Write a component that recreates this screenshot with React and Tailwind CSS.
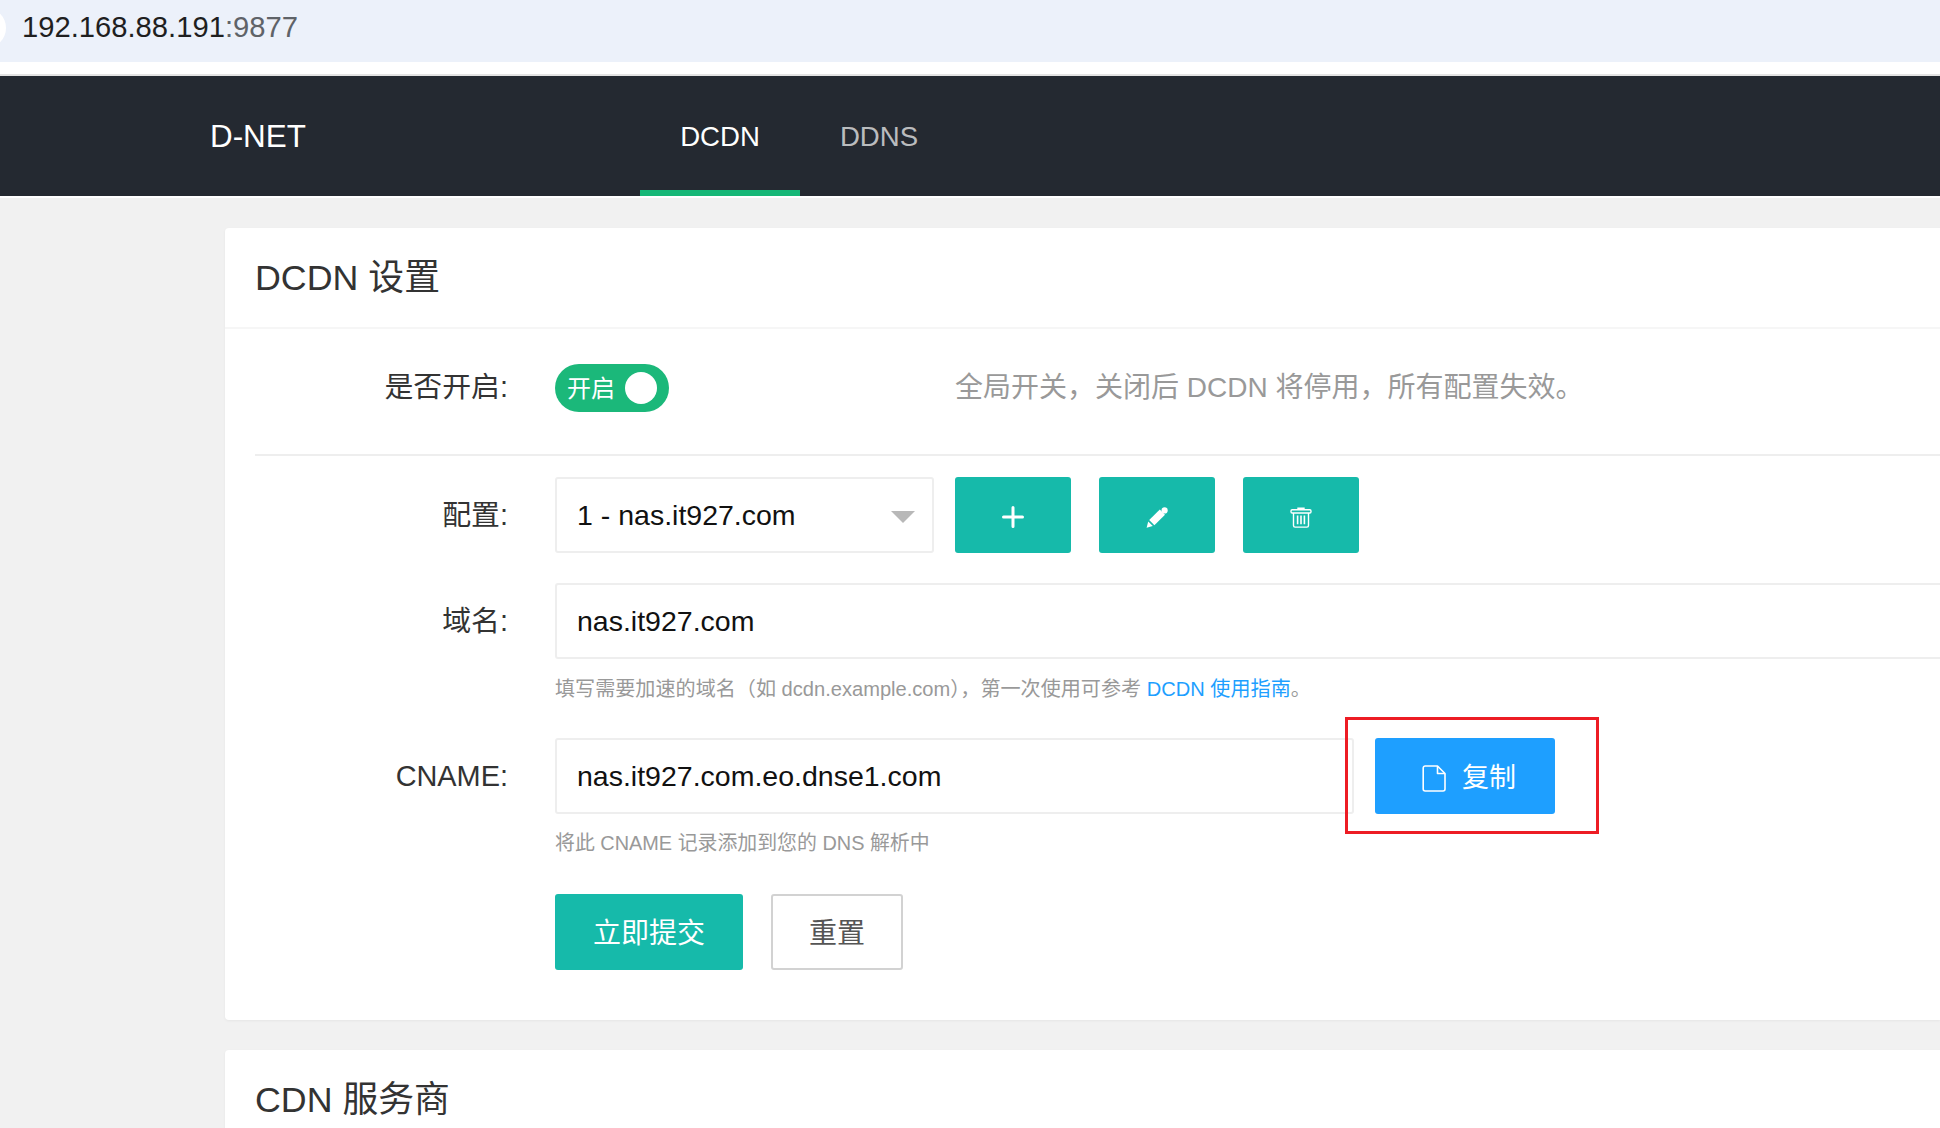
const Plus = () => (
  <svg width="22" height="22" viewBox="0 0 22 22" className="mt-1" fill="none" stroke="#fff" strokeWidth="3" strokeLinecap="round">
    <path d="M11 1.5v19M1.5 11h19" />
  </svg>
);

const Pencil = () => (
  <svg width="22" height="21" viewBox="0 0 22 21" className="mt-1" fill="#fff">
    <path d="M0.6 20.8 2.2 14.4 6.8 19Z" />
    <path d="M3.2 13 13.8 2.6 19 7.8 8.4 18.2Z" />
    <circle cx="18.6" cy="3.4" r="3.1" />
  </svg>
);

const Trash = () => (
  <svg width="22" height="21" viewBox="0 0 22 21" className="mt-1" fill="none" stroke="#fff" strokeWidth="1.4">
    <path d="M8 2.6V1.2h6v1.4" />
    <rect x="1" y="2.8" width="20" height="3.2" rx="1.2" />
    <path d="M3.5 6v12.5a1.6 1.6 0 0 0 1.6 1.6h11.8a1.6 1.6 0 0 0 1.6-1.6V6" />
    <path d="M7.6 8.6v8.6M11 8.6v8.6M14.4 8.6v8.6" strokeWidth="1.6" />
  </svg>
);

const FileIcon = () => (
  <svg width="24" height="27" viewBox="0 0 24 27" fill="none" stroke="#fff" strokeWidth="1.6" strokeLinejoin="round">
    <path d="M3.2 1H15.5L23 8.5V24a2 2 0 0 1-2 2H3.2a2 2 0 0 1-2-2V3a2 2 0 0 1 2-2Z" />
    <path d="M15.5 1V8.5H23" />
  </svg>
);

const Row = ({ label, children, className = "" }) => (
  <div className={`flex ${className}`}>
    <div className="w-[300px] h-[76px] shrink-0 pr-[47px] pt-[1px] flex items-center justify-end text-[28.9px] text-[#333]">
      {label}
    </div>
    {children}
  </div>
);

const Field = ({ children, className = "" }) => (
  <div className={`h-[76px] border-2 border-[#eeeeee] rounded-[3px] bg-white pl-[20px] flex items-center text-[28.5px] text-[#111] ${className}`}>
    {children}
  </div>
);

const IconButton = ({ children }) => (
  <div className="w-[116px] h-[76px] rounded-[3px] bg-[#16baaa] flex items-center justify-center">{children}</div>
);

const Hint = ({ children, className = "" }) => (
  <div className={`ml-[300px] mt-[15px] h-[30px] flex items-center leading-none text-[#999] whitespace-pre ${className}`}>{children}</div>
);

export default function App() {
  return (
    <div className="w-[1940px] h-[1128px] overflow-hidden bg-[#f1f1f1] font-['Liberation_Sans','Noto_Sans_CJK_SC',sans-serif]">
      <div className="relative h-[62px] bg-[#ecf1fa] pl-[22px] pb-[6px] flex items-center overflow-hidden text-[29.2px] text-[#1f1f1f]">
        <div className="absolute -left-[34px] top-[8px] w-[40px] h-[40px] rounded-full bg-white" />
        <span>192.168.88.191</span>
        <span className="text-[#5f6368]">:9877</span>
      </div>
      <div className="h-[12px] bg-white" />
      <div className="h-[2px] bg-[#e3e3e3]" />

      <nav className="h-[120px] bg-[#242931] flex pl-[210px] text-[27.6px]">
        <div className="w-[430px] pt-[2px] flex items-center text-[31.4px] text-white">D-NET</div>
        <div className="relative w-[160px] pt-[2px] flex items-center justify-center text-white">
          DCDN
          <div className="absolute left-0 right-0 bottom-0 h-[6px] bg-[#16b777]" />
        </div>
        <div className="w-[158px] pt-[2px] flex items-center justify-center text-white/70">DDNS</div>
      </nav>
      <div className="h-[2px] bg-white" />

      <main className="pl-[225px] pt-[30px] flex flex-col gap-[30px]">
        <section className="bg-white rounded-l-[4px] shadow-[0_1px_3px_rgba(0,0,0,0.05)] pb-[50px]">
          <div className="h-[101px] pt-[2px] pl-[30px] flex items-center border-b-2 border-[#f6f6f6] text-[35.8px] text-[#333]">
            DCDN 设置
          </div>

          <div className="pl-[30px]">
            <div className="flex pt-[35px] pb-[42px] border-b-2 border-[#eeeeee]">
              <div className="w-[300px] h-[48px] pr-[47px] flex items-center justify-end text-[28.9px] text-[#333]">是否开启:</div>
              <div className="relative w-[114px] h-[48px] rounded-full bg-[#1bb87a] pl-[12px] pt-[2px] flex items-center text-[24px] text-white">
                开启
                <div className="absolute right-[12px] top-[8px] w-[32px] h-[32px] rounded-full bg-white" />
              </div>
              <div className="ml-[286px] h-[48px] flex items-center text-[28px] text-[#999]">
                全局开关，关闭后 DCDN 将停用，所有配置失效。
              </div>
            </div>

            <Row label="配置:" className="mt-[21px]">
              <Field className="relative w-[379px]">
                1 - nas.it927.com
                <div className="absolute right-[17px] top-[32px] w-0 h-0 border-x-[12px] border-t-[12px] border-x-transparent border-t-[#b8b8b8]" />
              </Field>
              <div className="ml-[21px] flex gap-[28px]">
                <IconButton><Plus /></IconButton>
                <IconButton><Pencil /></IconButton>
                <IconButton><Trash /></IconButton>
              </div>
            </Row>

            <Row label="域名:" className="mt-[30px]">
              <Field className="flex-1 rounded-r-none border-r-0">nas.it927.com</Field>
            </Row>
            <Hint className="text-[20.1px]">
              填写需要加速的域名（如 dcdn.example.com），第一次使用可参考 <span className="text-[#1e9fff]">DCDN 使用指南</span>。
            </Hint>

            <Row label="CNAME:" className="mt-[34px]">
              <Field className="w-[799px]">nas.it927.com.eo.dnse1.com</Field>
              <div className="relative ml-[21px] w-[180px] h-[76px] rounded-[3px] bg-[#1e9fff] pl-[47px] pt-[4px] flex items-center gap-[16px] text-[27px] text-white">
                <FileIcon />
                复制
                <div className="absolute -left-[30px] -right-[44px] -top-[21px] -bottom-[20px] border-[3px] border-[#ed1c24]" />
              </div>
            </Row>
            <Hint className="text-[19.9px]">将此 CNAME 记录添加到您的 DNS 解析中</Hint>

            <div className="ml-[300px] mt-[35px] flex gap-[28px]">
              <div className="w-[188px] h-[76px] rounded-[3px] bg-[#16baaa] pt-[4px] flex items-center justify-center text-[28px] text-white">立即提交</div>
              <div className="w-[132px] h-[76px] rounded-[3px] bg-white border-2 border-[#d2d2d2] pt-[4px] flex items-center justify-center text-[28px] text-[#555]">重置</div>
            </div>
          </div>
        </section>

        <section className="bg-white rounded-l-[4px] shadow-[0_1px_3px_rgba(0,0,0,0.05)] h-[200px]">
          <div className="h-[98px] pt-[3px] pl-[30px] flex items-center text-[35.8px] text-[#333]">CDN 服务商</div>
        </section>
      </main>
    </div>
  );
}
